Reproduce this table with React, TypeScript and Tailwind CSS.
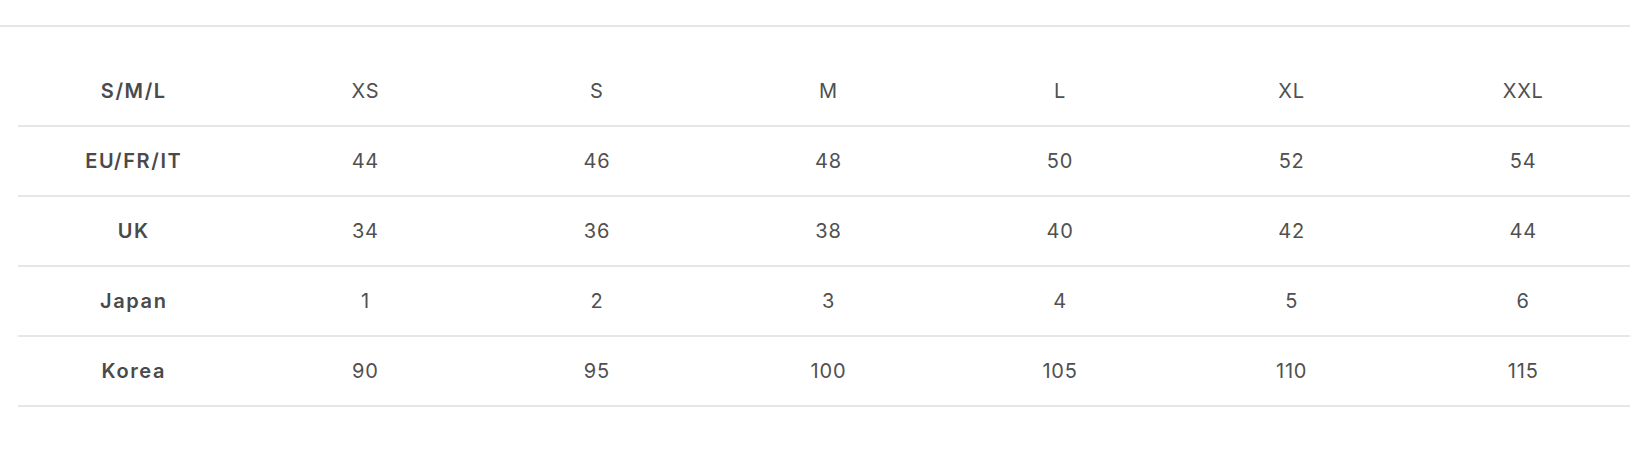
const header = ['S/M/L', 'XS', 'S', 'M', 'L', 'XL', 'XXL'];

const rows: string[][] = [
  ['EU/FR/IT', '44', '46', '48', '50', '52', '54'],
  ['UK', '34', '36', '38', '40', '42', '44'],
  ['Japan', '1', '2', '3', '4', '5', '6'],
  ['Korea', '90', '95', '100', '105', '110', '115'],
];

const Row = ({ cells, first }: { cells: string[]; first?: boolean }) => (
  <div
    className={`grid grid-cols-7 items-center border-b-2 border-[#e6e6e6] ${first ? 'h-[71px]' : 'h-[70px]'}`}
  >
    {cells.map((cell, i) => (
      <div
        key={i}
        className={
          i === 0
            ? 'text-center font-semibold tracking-[0.08em] text-[#4a4a4a]'
            : 'text-center tracking-[0.04em] text-[#505050]'
        }
      >
        {cell}
      </div>
    ))}
  </div>
);

export default function App() {
  return (
    <div className="w-[1630px] h-[452px] overflow-hidden bg-white font-['Inter',sans-serif] text-[20px]">
      <div className="mt-[25px] border-t-2 border-[#e6e6e6] pt-[29px]">
        <div className="ml-[18px] w-[1621px]">
          <Row cells={header} first />
          {rows.map((r) => (
            <Row key={r[0]} cells={r} />
          ))}
        </div>
      </div>
    </div>
  );
}
